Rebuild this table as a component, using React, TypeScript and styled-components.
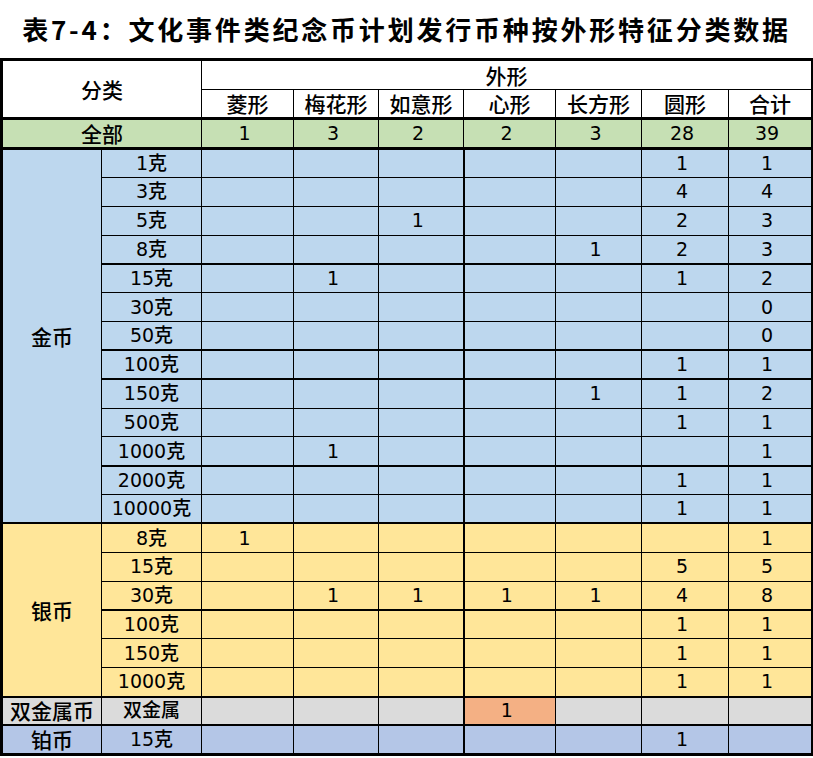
import React from 'react';
import styled, { createGlobalStyle } from 'styled-components';

const Global = createGlobalStyle`
  html, body { margin: 0; padding: 0; background: #ffffff; }
  body { font-family: "DejaVu Sans", "Noto Sans CJK SC", sans-serif; color: #000; }
`;

const Page = styled.div`
  width: 813px;
`;

const Title = styled.h1`
  margin: 0;
  height: 58px;
  display: flex;
  align-items: center;
  justify-content: center;
  font-family: "Noto Sans CJK SC", sans-serif;
  font-size: 26px;
  font-weight: 700;
  letter-spacing: 2.8px;
  padding: 0 0 2px 0;
  box-sizing: border-box;
`;

const Table = styled.table`
  border-collapse: collapse;
  table-layout: fixed;
  width: 811px;
  border: 3px solid #000;
  font-size: 19px;
  font-weight: 500;
`;

const Row = styled.tr<{ $bg?: string; $h?: number }>`
  background: ${p => p.$bg ?? '#ffffff'};
  height: ${p => p.$h ?? 28.85}px;
`;

const Cell = styled.td<{ $bottom?: number; $thickLeft?: boolean; $bg?: string }>`
  border: 1px solid #000;
  border-bottom-width: ${p => p.$bottom ?? 1}px;
  border-left-width: ${p => (p.$thickLeft ? 2 : 1)}px;
  background: ${p => p.$bg ?? 'transparent'};
  padding: 0;
  text-align: center;
  vertical-align: middle;
  line-height: 1;
  white-space: nowrap;
`;

const ValueCell = styled(Cell)`
  padding-right: 6px;
`;

const HeadCell = styled(Cell)`
  font-size: 21px;
  font-family: "Noto Sans CJK SC", sans-serif;
`;

const GroupCell = styled(Cell)`
  font-size: 21px;
  font-family: "Noto Sans CJK SC", sans-serif;
`;

const COLS = [100, 100, 92, 85, 85, 92, 86, 87, 84];
const SHAPES = ['菱形', '梅花形', '如意形', '心形', '长方形', '圆形', '合计'];
const TOTALS = ['1', '3', '2', '2', '3', '28', '39'];

type DataRow = { w: string; v: string[]; thick?: boolean };

const GOLD: DataRow[] = [
  { w: '1克', v: ['', '', '', '', '', '1', '1'] },
  { w: '3克', v: ['', '', '', '', '', '4', '4'] },
  { w: '5克', v: ['', '', '1', '', '', '2', '3'] },
  { w: '8克', v: ['', '', '', '', '1', '2', '3'], thick: true },
  { w: '15克', v: ['', '1', '', '', '', '1', '2'] },
  { w: '30克', v: ['', '', '', '', '', '', '0'] },
  { w: '50克', v: ['', '', '', '', '', '', '0'], thick: true },
  { w: '100克', v: ['', '', '', '', '', '1', '1'], thick: true },
  { w: '150克', v: ['', '', '', '', '1', '1', '2'] },
  { w: '500克', v: ['', '', '', '', '', '1', '1'] },
  { w: '1000克', v: ['', '1', '', '', '', '', '1'], thick: true },
  { w: '2000克', v: ['', '', '', '', '', '1', '1'] },
  { w: '10000克', v: ['', '', '', '', '', '1', '1'], thick: true },
];

const SILVER: DataRow[] = [
  { w: '8克', v: ['1', '', '', '', '', '', '1'] },
  { w: '15克', v: ['', '', '', '', '', '5', '5'] },
  { w: '30克', v: ['', '1', '1', '1', '1', '4', '8'], thick: true },
  { w: '100克', v: ['', '', '', '', '', '1', '1'] },
  { w: '150克', v: ['', '', '', '', '', '1', '1'] },
  { w: '1000克', v: ['', '', '', '', '', '1', '1'], thick: true },
];

type Group = { name: string; bg: string; rows: DataRow[]; highlight?: number };

const GROUPS: Group[] = [
  { name: '金币', bg: '#bdd7ee', rows: GOLD },
  { name: '银币', bg: '#ffe699', rows: SILVER },
  { name: '双金属币', bg: '#dbdbdb', rows: [{ w: '双金属', v: ['', '', '', '1', '', '', ''], thick: true }], highlight: 3 },
  { name: '铂币', bg: '#b4c6e7', rows: [{ w: '15克', v: ['', '', '', '', '', '1', ''] }] },
];

const GroupRows: React.FC<{ g: Group }> = ({ g }) => (
  <>
    {g.rows.map((r, i) => {
      const b = r.thick ? 2 : 1;
      return (
        <Row key={i} $bg={g.bg}>
          {i === 0 && (
            <GroupCell rowSpan={g.rows.length} $bottom={2}>
              {g.name}
            </GroupCell>
          )}
          <Cell $bottom={b}>{r.w}</Cell>
          {r.v.map((x, j) => (
            <ValueCell
              key={j}
              $bottom={b}
              $thickLeft={j === 3}
              $bg={g.highlight === j ? '#f4b084' : undefined}
            >
              {x}
            </ValueCell>
          ))}
        </Row>
      );
    })}
  </>
);

export default function App() {
  return (
    <Page>
      <Global />
      <Title>表7-4：文化事件类纪念币计划发行币种按外形特征分类数据</Title>
      <Table>
        <colgroup>
          {COLS.map((w, i) => (
            <col key={i} style={{ width: w }} />
          ))}
        </colgroup>
        <thead>
          <Row $h={30}>
            <HeadCell colSpan={2} rowSpan={2} $bottom={3}>分类</HeadCell>
            <HeadCell colSpan={7}>外形</HeadCell>
          </Row>
          <Row $h={29}>
            {SHAPES.map(s => (
              <HeadCell key={s} $bottom={3}>{s}</HeadCell>
            ))}
          </Row>
        </thead>
        <tbody>
          <Row $bg="#c6e0b4" $h={30}>
            <HeadCell colSpan={2} $bottom={3}>全部</HeadCell>
            {TOTALS.map((t, i) => (
              <ValueCell key={i} $bottom={3}>{t}</ValueCell>
            ))}
          </Row>
          {GROUPS.map(g => (
            <GroupRows key={g.name} g={g} />
          ))}
        </tbody>
      </Table>
    </Page>
  );
}
